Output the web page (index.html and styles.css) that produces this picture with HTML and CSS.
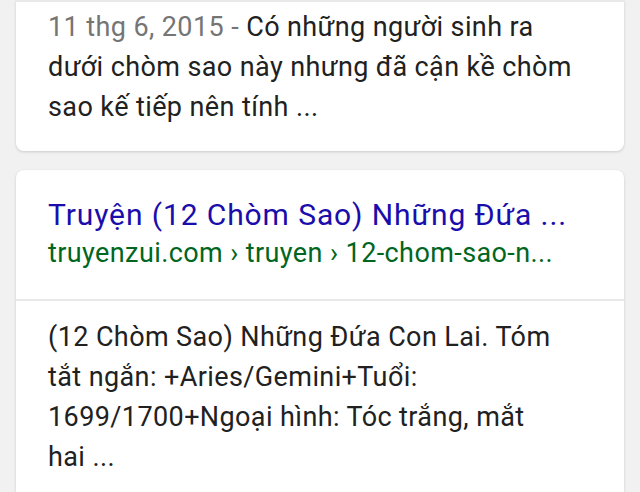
FILE: index.html
```html
<!DOCTYPE html>
<html lang="vi">
<head>
    <meta charset="UTF-8">
    <meta name="viewport" content="width=device-width, initial-scale=1.0">
    <title>Kết quả tìm kiếm</title>
    <link rel="stylesheet" href="styles.css">
</head>
<body>
    <div class="card card-top">
        <div class="snippet">
            <span class="date">11 thg 6, 2015 - </span>Có những người sinh ra dưới chòm sao này nhưng đã cận kề chòm sao kế tiếp nên tính ...
        </div>
    </div>
    <div class="card">
        <a class="result-head" href="#">
            <div class="title">Truyện (12 Chòm Sao) Những Đứa ...</div>
            <div class="url">truyenzui.com › truyen › 12-chom-sao-n...</div>
        </a>
        <div class="body-text">
            (12 Chòm Sao) Những Đứa Con Lai. Tóm tắt ngắn: +Aries/Gemini+Tuổi: 1699/1700+Ngoại hình: Tóc trắng, mắt hai ...
        </div>
    </div>
</body>
</html>
```

FILE: styles.css
```css
body {
    margin: 0;
    background-color: #f1f1f1;
    font-family: 'Roboto', 'Noto Sans', sans-serif;
    color: #212121;
}
.card {
    background-color: #ffffff;
    margin: 0 16px 19px 16px;
    border-radius: 8px;
    box-shadow: 0 1px 3px rgba(0, 0, 0, 0.16);
}
.card-top {
    border-top: 2px solid #e9e9e9;
    border-radius: 0 0 8px 8px;
}
.snippet,
.body-text {
    font-size: 27px;
    line-height: 40px;
    letter-spacing: 0.4px;
}
.snippet {
    padding: 5px 36px 24px 32px;
}
.date {
    color: #757575;
}
.result-head {
    display: block;
    text-decoration: none;
    padding: 25px 32px 28px 32px;
    border-bottom: 2px solid #e9e9e9;
    white-space: nowrap;
}
.title {
    color: #1a0dab;
    font-size: 30px;
    line-height: 40px;
    letter-spacing: 0.9px;
}
.url {
    color: #006621;
    font-size: 27px;
    line-height: 36px;
    letter-spacing: 0.4px;
}
.body-text {
    padding: 16px 64px 24px 32px;
}
```
